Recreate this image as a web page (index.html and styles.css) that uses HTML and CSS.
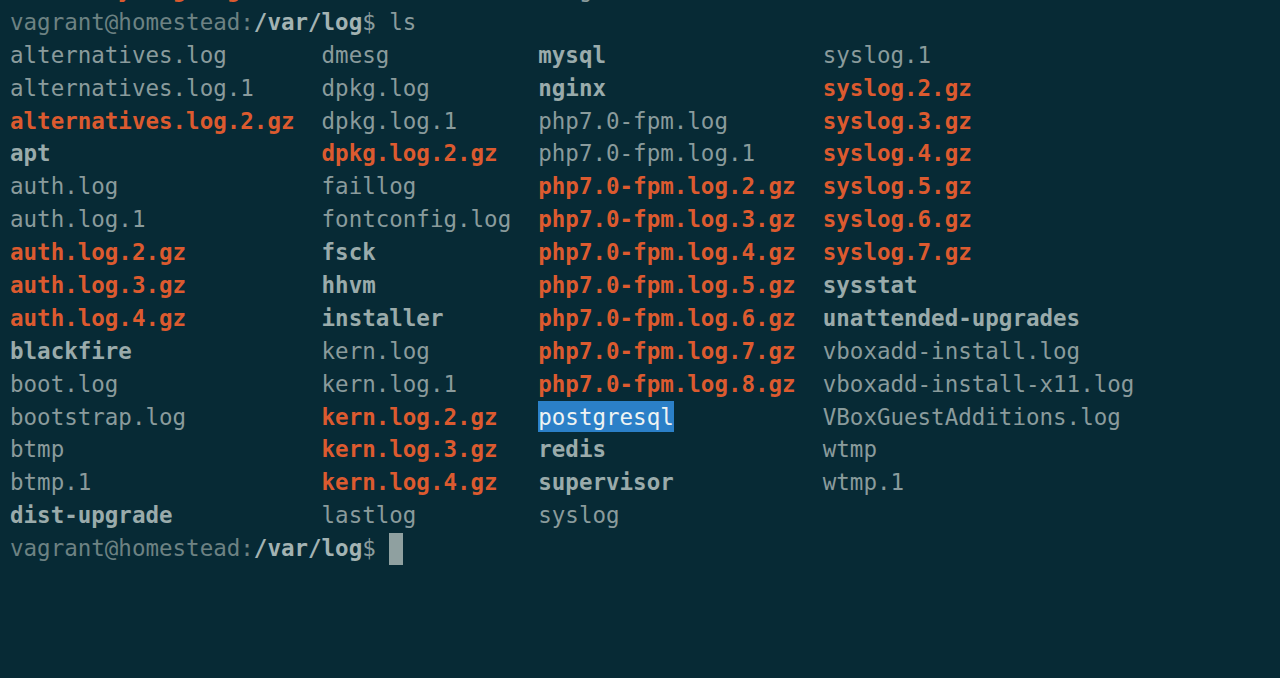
FILE: index.html
```html
<!DOCTYPE html>
<html>
<head>
<meta charset="utf-8">
<link rel="stylesheet" href="styles.css">
</head>
<body>
<div class="term">
  <div class="line"><span class="red">execute yum get gz</span><span class="reg">                      log</span></div>
  <div class="line"><span class="user">vagrant@homestead:</span><span class="path">/var/log</span><span class="reg">$ ls</span></div>
  <div class="grid">
    <span class="reg">alternatives.log</span><span class="reg">dmesg</span><span class="dir">mysql</span><span class="reg">syslog.1</span>
    <span class="reg">alternatives.log.1</span><span class="reg">dpkg.log</span><span class="dir">nginx</span><span class="red">syslog.2.gz</span>
    <span class="red">alternatives.log.2.gz</span><span class="reg">dpkg.log.1</span><span class="reg">php7.0-fpm.log</span><span class="red">syslog.3.gz</span>
    <span class="dir">apt</span><span class="red">dpkg.log.2.gz</span><span class="reg">php7.0-fpm.log.1</span><span class="red">syslog.4.gz</span>
    <span class="reg">auth.log</span><span class="reg">faillog</span><span class="red">php7.0-fpm.log.2.gz</span><span class="red">syslog.5.gz</span>
    <span class="reg">auth.log.1</span><span class="reg">fontconfig.log</span><span class="red">php7.0-fpm.log.3.gz</span><span class="red">syslog.6.gz</span>
    <span class="red">auth.log.2.gz</span><span class="dir">fsck</span><span class="red">php7.0-fpm.log.4.gz</span><span class="red">syslog.7.gz</span>
    <span class="red">auth.log.3.gz</span><span class="dir">hhvm</span><span class="red">php7.0-fpm.log.5.gz</span><span class="dir">sysstat</span>
    <span class="red">auth.log.4.gz</span><span class="dir">installer</span><span class="red">php7.0-fpm.log.6.gz</span><span class="dir">unattended-upgrades</span>
    <span class="dir">blackfire</span><span class="reg">kern.log</span><span class="red">php7.0-fpm.log.7.gz</span><span class="reg">vboxadd-install.log</span>
    <span class="reg">boot.log</span><span class="reg">kern.log.1</span><span class="red">php7.0-fpm.log.8.gz</span><span class="reg">vboxadd-install-x11.log</span>
    <span class="reg">bootstrap.log</span><span class="red">kern.log.2.gz</span><span class="cell"><span class="sel">postgresql</span></span><span class="reg">VBoxGuestAdditions.log</span>
    <span class="reg">btmp</span><span class="red">kern.log.3.gz</span><span class="dir">redis</span><span class="reg">wtmp</span>
    <span class="reg">btmp.1</span><span class="red">kern.log.4.gz</span><span class="dir">supervisor</span><span class="reg">wtmp.1</span>
    <span class="dir">dist-upgrade</span><span class="reg">lastlog</span><span class="reg">syslog</span><span class="cell"></span>
  </div>
  <div class="line"><span class="user">vagrant@homestead:</span><span class="path">/var/log</span><span class="reg">$ </span><span class="cursor"></span></div>
</div>
</body>
</html>
```

FILE: styles.css
```css
html, body {
  margin: 0;
  padding: 0;
  background: #072a35;
  height: 100%;
  overflow: hidden;
}

.term {
  font-family: "DejaVu Sans Mono", "Liberation Mono", monospace;
  font-size: 22.5px;
  line-height: 32.9px;
  color: #8a9b9c;
  padding-left: 10px;
  margin-top: -27px;
}

.term span {
  white-space: pre;
}

.line {
  display: flex;
  height: 32.9px;
}

.grid {
  display: grid;
  grid-template-columns: 23ch 16ch 21ch auto;
  grid-auto-rows: 32.9px;
}

.reg {
  color: #8a9b9c;
}

.dir {
  color: #9aabab;
  font-weight: bold;
}

.red {
  color: #dc5a2f;
  font-weight: bold;
}

.user {
  color: #6d8283;
}

.path {
  color: #a3b3b3;
  font-weight: bold;
}

.sel {
  display: inline-block;
  background: #2b80c8;
  color: #eef3f3;
  height: 31px;
  line-height: 32px;
}

.cursor {
  display: inline-block;
  width: 13.5px;
  height: 32px;
  background: #8fa0a0;
  align-self: center;
}
```
